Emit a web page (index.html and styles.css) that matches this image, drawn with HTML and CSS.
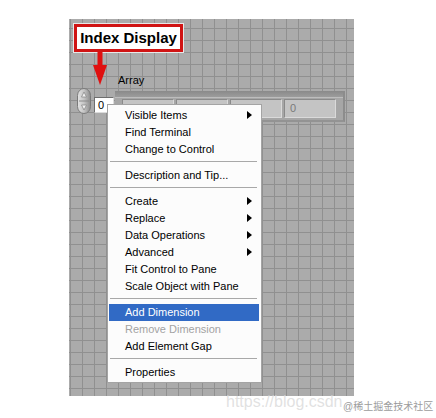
FILE: index.html
```html
<!DOCTYPE html>
<html>
<head>
<meta charset="utf-8">
<link rel="stylesheet" href="styles.css">
</head>
<body>
<div class="page">
  <div class="panel">
    <div class="callout">Index Display</div>
    <svg class="pointer" width="16" height="34" viewBox="0 0 16 34">
      <rect x="5.5" y="0" width="5" height="15" fill="#e01010"/>
      <polygon points="1,13 15,13 8,33" fill="#e01010"/>
    </svg>
    <div class="label">Array</div>
    <svg class="spinner" width="14" height="26" viewBox="0 0 14 26">
      <defs>
        <linearGradient id="sg" x1="0" y1="0" x2="1" y2="0">
          <stop offset="0" stop-color="#e4e4e4"/>
          <stop offset="0.5" stop-color="#c4c4c4"/>
          <stop offset="1" stop-color="#8c8c8c"/>
        </linearGradient>
      </defs>
      <rect x="0.5" y="0.5" width="13" height="25" rx="6.5" ry="7" fill="url(#sg)" stroke="#7a7a7a"/>
      <line x1="2" y1="13" x2="12" y2="13" stroke="#8a8a8a"/>
      <polygon points="7,4 4.5,9 9.5,9" fill="#f2f2f2" stroke="#8a8a8a" stroke-width="0.8"/>
      <polygon points="7,22 4.5,17 9.5,17" fill="#f2f2f2" stroke="#8a8a8a" stroke-width="0.8"/>
    </svg>
    <div class="index-box">0</div>
    <div class="frame">
      <div class="band"></div>
      <div class="cells">
        <div class="cell">0</div>
        <div class="cell">0</div>
        <div class="cell">0</div>
        <div class="cell">0</div>
      </div>
    </div>
    <div class="menu">
      <div class="item sub">Visible Items</div>
      <div class="item">Find Terminal</div>
      <div class="item">Change to Control</div>
      <div class="sep"></div>
      <div class="item">Description and Tip...</div>
      <div class="sep"></div>
      <div class="item sub">Create</div>
      <div class="item sub">Replace</div>
      <div class="item sub">Data Operations</div>
      <div class="item sub">Advanced</div>
      <div class="item">Fit Control to Pane</div>
      <div class="item">Scale Object with Pane</div>
      <div class="sep"></div>
      <div class="item active">Add Dimension</div>
      <div class="item disabled">Remove Dimension</div>
      <div class="item">Add Element Gap</div>
      <div class="sep"></div>
      <div class="item">Properties</div>
    </div>
  </div>
  <div class="wm-url">https://blog.csdn</div>
  <div class="wm-tag">@稀土掘金技术社区</div>
</div>
</body>
</html>
```
FILE: styles.css
```css
html, body {
  margin: 0;
  padding: 0;
  background: #ffffff;
}
.page {
  position: relative;
  width: 436px;
  height: 418px;
  overflow: hidden;
  font-family: "Liberation Sans", Arial, sans-serif;
}
.panel {
  position: absolute;
  left: 69px;
  top: 19px;
  width: 285px;
  height: 377px;
  background-color: #ababab;
  background-image:
    linear-gradient(to right, #909090 1px, transparent 1px),
    linear-gradient(to bottom, #909090 1px, transparent 1px);
  background-size: 12px 12px;
  background-position: 1px 9px;
}
.callout {
  position: absolute;
  left: 5px;
  top: 5px;
  width: 109px;
  height: 28px;
  box-sizing: border-box;
  border: 3px solid #d01414;
  outline: 1px solid #e8e8e8;
  background: #ffffff;
  font-weight: bold;
  font-size: 15px;
  line-height: 22px;
  text-align: center;
  color: #000;
}
.pointer {
  position: absolute;
  left: 23px;
  top: 33px;
}
.label {
  position: absolute;
  left: 49px;
  top: 55px;
  font-size: 11px;
  color: #000;
}
.spinner {
  position: absolute;
  left: 8px;
  top: 69px;
}
.index-box {
  position: absolute;
  left: 25px;
  top: 78px;
  width: 20px;
  height: 16px;
  box-sizing: border-box;
  background: #ffffff;
  border-top: 1px solid #6e6e6e;
  border-left: 1px solid #6e6e6e;
  border-right: 1px solid #dcdcdc;
  border-bottom: 1px solid #dcdcdc;
  font-size: 11px;
  line-height: 14px;
  padding-left: 3px;
  color: #000;
}
.frame {
  position: absolute;
  left: 46px;
  top: 72px;
  width: 230px;
  height: 31px;
  box-sizing: border-box;
  background: #a6a6a6;
  border-right: 2px solid #8c8c8c;
  border-bottom: 2px solid #939393;
  display: flex;
  flex-direction: column;
}
.band {
  height: 6px;
  background: linear-gradient(to bottom, #8a8a8a, #9c9c9c);
  border-bottom: 1px solid #bdbdbd;
}
.cells {
  display: flex;
  gap: 2px;
  padding: 1px 0 0 7px;
}
.cell {
  width: 52px;
  height: 19px;
  box-sizing: border-box;
  background: #c4c4c4;
  border-top: 1px solid #8a8a8a;
  border-left: 1px solid #8a8a8a;
  border-right: 1px solid #dadada;
  border-bottom: 1px solid #dadada;
  font-size: 11px;
  line-height: 17px;
  padding-left: 5px;
  color: #7a7a7a;
}
.menu {
  position: absolute;
  left: 38px;
  top: 85px;
  width: 155px;
  box-sizing: border-box;
  background: #fcfcfc;
  border: 1px solid #a4a4a4;
  padding: 2px 0 1px 0;
  display: flex;
  flex-direction: column;
  font-size: 11px;
  color: #000;
}
.item {
  position: relative;
  height: 17px;
  line-height: 17px;
  margin: 0 2px 0 1px;
  padding-left: 16px;
  white-space: nowrap;
}
.item.sub::after {
  content: "";
  position: absolute;
  right: 7px;
  top: 4px;
  width: 0;
  height: 0;
  border-left: 5px solid #000;
  border-top: 4.5px solid transparent;
  border-bottom: 4.5px solid transparent;
}
.item.active {
  background: #316ac5;
  color: #ffffff;
}
.item.disabled {
  color: #a3a3a3;
}
.sep {
  height: 9px;
  margin: 0 4px 0 2px;
  box-sizing: border-box;
  border-bottom: 4px solid transparent;
  background: linear-gradient(#a8a8a8, #a8a8a8) no-repeat 0 3px / 100% 1px;
}
.wm-url {
  position: absolute;
  left: 226px;
  top: 393px;
  font-size: 16px;
  color: rgba(215, 215, 215, 0.75);
  white-space: nowrap;
}
.wm-tag {
  position: absolute;
  left: 343px;
  top: 398px;
  font-family: "Liberation Sans", "Noto Sans CJK SC", sans-serif;
  font-size: 10px;
  color: #9c9c9c;
  white-space: nowrap;
}
```
